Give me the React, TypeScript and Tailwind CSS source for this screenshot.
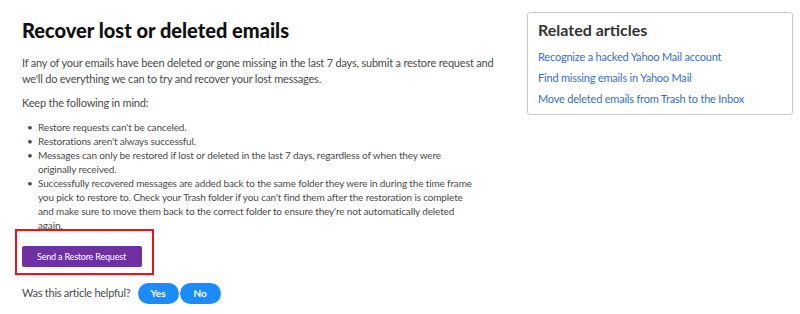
import React from "react";

const bullets = [
  ["Restore requests can't be canceled."],
  ["Restorations aren't always successful."],
  ["Messages can only be restored if lost or deleted in the last 7 days, regardless of when they were", "originally received."],
  [
    "Successfully recovered messages are added back to the same folder they were in during the time frame",
    "you pick to restore to. Check your Trash folder if you can't find them after the restoration is complete",
    "and make sure to move them back to the correct folder to ensure they're not automatically deleted",
    "again.",
  ],
];

const related = [
  "Recognize a hacked Yahoo Mail account",
  "Find missing emails in Yahoo Mail",
  "Move deleted emails from Trash to the Inbox",
];

export default function App() {
  return (
    <div className="flex h-[314px] w-[800px] bg-white font-['Lato',sans-serif]">
      <div className="w-[505px] shrink-0 pl-[22px]">
        <h1 className="mt-[16px] text-[20px] font-black leading-[28px] text-[#111111]">
          Recover lost or deleted emails
        </h1>
        <p className="mt-[10.5px] w-[480px] text-[11px] leading-[16.5px] tracking-[-0.2px] text-[#4a4a4a]">
          If any of your emails have been deleted or gone missing in the last 7 days, submit a restore request and
          we'll do everything we can to try and recover your lost messages.
        </p>
        <p className="mt-[7px] text-[11px] leading-[16.5px] tracking-[-0.2px] text-[#4a4a4a]">
          Keep the following in mind:
        </p>
        <ul className="mt-[9px] text-[10px] leading-[14px] tracking-[-0.15px] text-[#4a4a4a]">
          {bullets.map((lines) => (
            <li key={lines[0]} className="flex">
              <span className="w-[16px] shrink-0 pl-[5px]">•</span>
              <div className="flex flex-col">
                {lines.map((l) => (
                  <span key={l} className="block whitespace-nowrap">
                    {l}
                  </span>
                ))}
              </div>
            </li>
          ))}
        </ul>
        <div className="ml-[-7px] mt-[-3px] h-[46px] w-[139px] border-[2.5px] border-[#e3161f] pl-[4.5px] pt-[10.5px]">
          <button className="h-[21px] w-[120px] rounded-[2px] bg-[#6f31a2] text-[9px] tracking-[-0.2px] text-white">
            Send a Restore Request
          </button>
        </div>
        <div className="mt-[8px] flex items-center">
          <span className="mr-[7px] text-[11px] tracking-[-0.25px] text-[#4a4a4a]">Was this article helpful?</span>
          <button className="h-[21px] w-[41px] rounded-full bg-[#1a8cff] text-[10px] font-bold text-white">Yes</button>
          <button className="ml-[1px] h-[21px] w-[41px] rounded-full bg-[#1a8cff] text-[10px] font-bold text-white">No</button>
        </div>
      </div>
      <div className="ml-[22px] mt-[12px] h-[103px] w-[266px] rounded-[3px] border border-[#c8c8c8] px-[10px] pt-[6px]">
        <h2 className="text-[16px] font-bold leading-[22px] text-[#333333]">Related articles</h2>
        <ul className="mt-[7.5px] flex flex-col gap-[5px] text-[11px] leading-[16px] tracking-[-0.2px] text-[#3a6ec4]">
          {related.map((r) => (
            <li key={r}>
              <a href="#">{r}</a>
            </li>
          ))}
        </ul>
      </div>
    </div>
  );
}
